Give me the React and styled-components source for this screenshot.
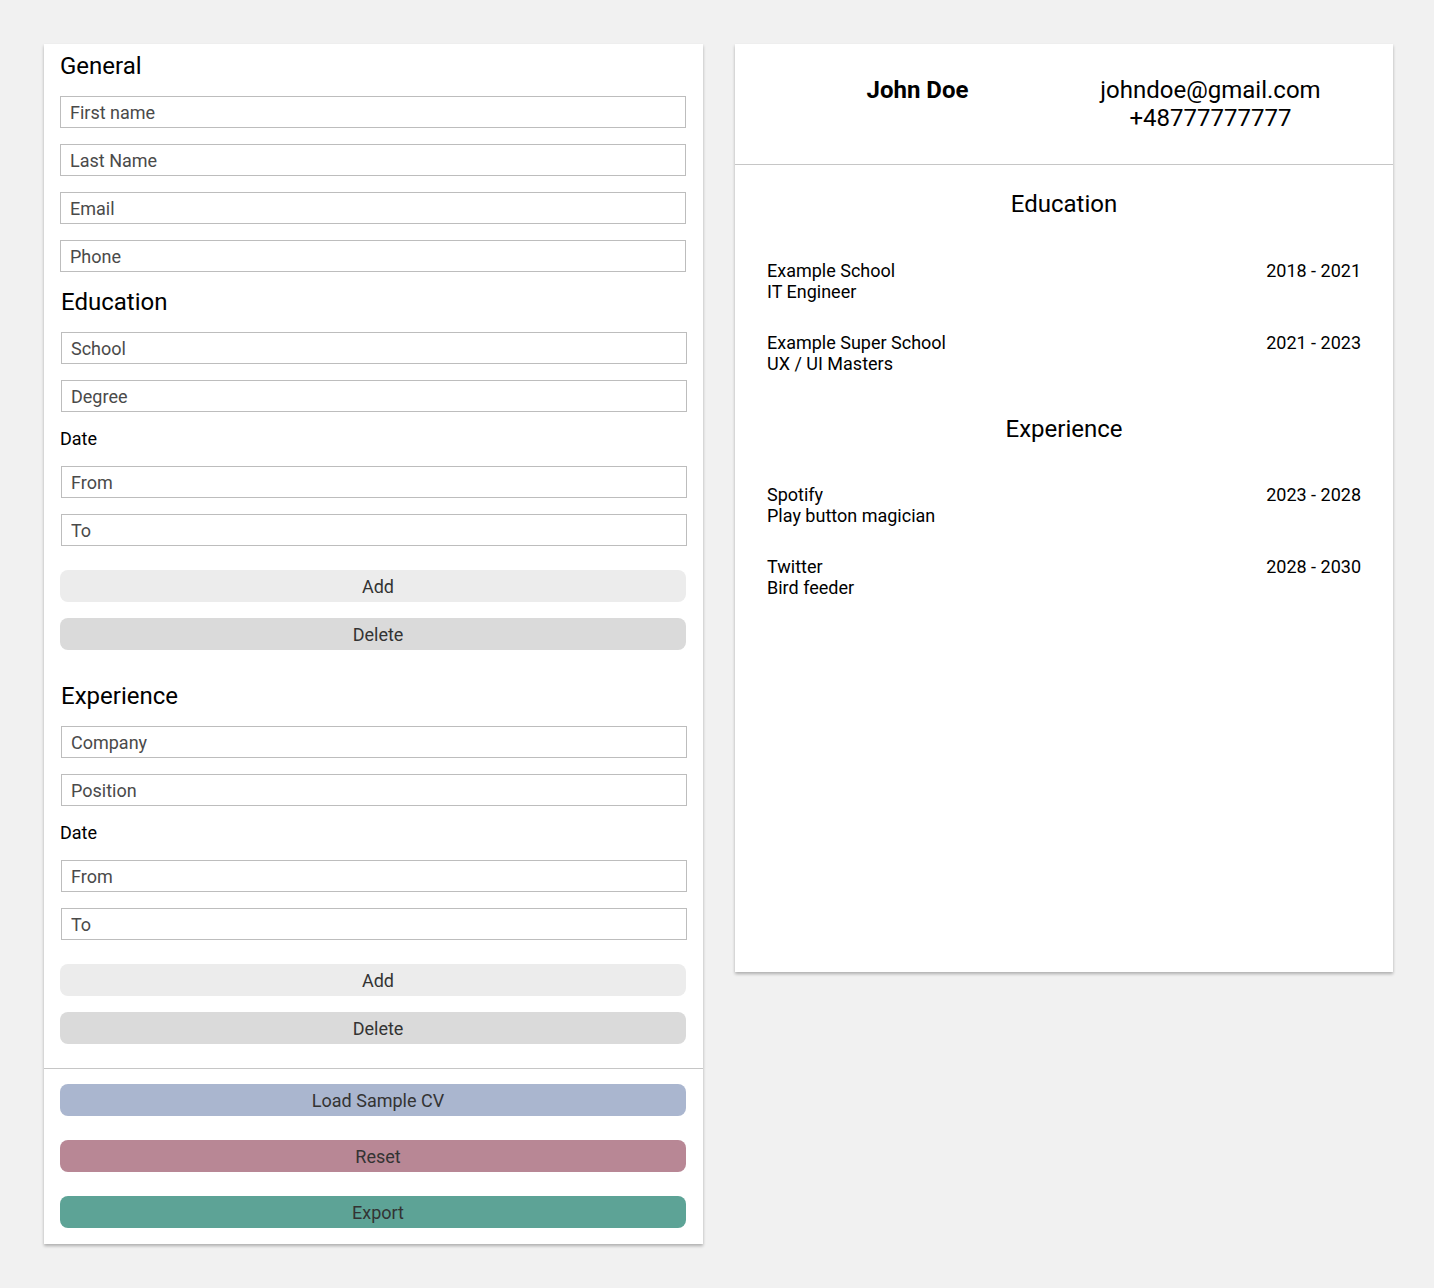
import React from 'react';
import styled, { createGlobalStyle } from 'styled-components';

// page + base styles
const GlobalStyle = createGlobalStyle`
  * { box-sizing: border-box; }
  body {
    margin: 0;
    background: #f1f1f1;
    font-family: Roboto, "Noto Sans", sans-serif;
    color: #000;
  }
`;

const Page = styled.div`
  display: grid;
  grid-template-columns: 659px 658px;
  column-gap: 32px;
  align-items: start;
  padding: 44px 41px 44px 44px;
`;

const Card = styled.div`
  background: #fff;
  box-shadow: 0 2px 3px rgba(0, 0, 0, 0.28);
`;

// editor side
const Editor = styled(Card)`
  display: flex;
  flex-direction: column;
  padding: 8px 0 16px;
`;

const FormBody = styled.div`
  display: flex;
  flex-direction: column;
  gap: 16px;
  padding: 0 17px 0 16px;
`;

const Heading = styled.h2`
  margin: ${(p) => (p.$spaced ? '16px' : '0')} 0 0 ${(p) => (p.$shift ? '1px' : '0')};
  font-size: 24px;
  line-height: 28px;
  font-weight: 400;
`;

const Label = styled.div`
  font-size: 18px;
  line-height: 22px;
`;

const Input = styled.input`
  display: block;
  width: 100%;
  height: 32px;
  margin: 0 0 0 ${(p) => (p.$shift ? '1px' : '0')};
  padding: 0 9px;
  border: 1px solid #bdbdbd;
  border-radius: 0;
  font-family: inherit;
  font-size: 18px;
  color: #333;
  outline: none;
  &::placeholder {
    color: #4a4a4a;
  }
`;

const ButtonGroup = styled.div`
  display: flex;
  flex-direction: column;
  gap: ${(p) => p.$gap || 16}px;
  margin-top: ${(p) => p.$top || 0}px;
`;

const Button = styled.button`
  height: 32px;
  width: 100%;
  padding: 0 0 0 10px;
  border: none;
  border-radius: 8px;
  background: ${(p) => p.$bg};
  font-family: inherit;
  font-size: 18px;
  color: #333;
  cursor: pointer;
`;

const Actions = styled.div`
  margin-top: 24px;
  border-top: 1px solid #c6c6c6;
  padding: 15px 17px 0 16px;
`;

// preview side
const Preview = styled(Card)`
  height: 928px;
`;

const PreviewHeader = styled.div`
  display: grid;
  grid-template-columns: 1fr 1fr;
  padding: 32px 36px;
  border-bottom: 1px solid #c6c6c6;
  text-align: center;
  font-size: 24px;
  line-height: 28px;
`;

const Name = styled.div`
  font-weight: 700;
`;

const PreviewBody = styled.div`
  padding: 25px 32px 0;
`;

const PreviewTitle = styled.h3`
  margin: ${(p) => (p.$first ? '0' : '41px')} 0 41.5px;
  text-align: center;
  font-size: 24px;
  line-height: 28px;
  font-weight: 400;
`;

const EntryList = styled.div`
  display: flex;
  flex-direction: column;
  gap: 30px;
`;

const Entry = styled.div`
  display: flex;
  justify-content: space-between;
  font-size: 18px;
  line-height: 21px;
`;

const education = [
  { title: 'Example School', sub: 'IT Engineer', from: '2018', to: '2021' },
  { title: 'Example Super School', sub: 'UX / UI Masters', from: '2021', to: '2023' },
];

const experience = [
  { title: 'Spotify', sub: 'Play button magician', from: '2023', to: '2028' },
  { title: 'Twitter', sub: 'Bird feeder', from: '2028', to: '2030' },
];

function EntryRows({ items }) {
  return (
    <EntryList>
      {items.map((it) => (
        <Entry key={it.title}>
          <div>
            <div>{it.title}</div>
            <div>{it.sub}</div>
          </div>
          <div>{it.from} - {it.to}</div>
        </Entry>
      ))}
    </EntryList>
  );
}

function DateBlock() {
  return (
    <>
      <Label>Date</Label>
      <Input $shift placeholder="From" />
      <Input $shift placeholder="To" />
      <ButtonGroup $top={8}>
        <Button $bg="#ececec">Add</Button>
        <Button $bg="#dadada">Delete</Button>
      </ButtonGroup>
    </>
  );
}

export default function App() {
  return (
    <>
      <GlobalStyle />
      <Page>
        <Editor>
          <FormBody>
            <Heading>General</Heading>
            <Input placeholder="First name" />
            <Input placeholder="Last Name" />
            <Input placeholder="Email" />
            <Input placeholder="Phone" />

            <Heading $shift>Education</Heading>
            <Input $shift placeholder="School" />
            <Input $shift placeholder="Degree" />
            <DateBlock />

            <Heading $shift $spaced>Experience</Heading>
            <Input $shift placeholder="Company" />
            <Input $shift placeholder="Position" />
            <DateBlock />
          </FormBody>
          <Actions>
            <ButtonGroup $gap={24}>
              <Button $bg="#aab6cf">Load Sample CV</Button>
              <Button $bg="#b88795">Reset</Button>
              <Button $bg="#5da396">Export</Button>
            </ButtonGroup>
          </Actions>
        </Editor>

        <Preview>
          <PreviewHeader>
            <Name>John Doe</Name>
            <div>
              <div>johndoe@gmail.com</div>
              <div>+48777777777</div>
            </div>
          </PreviewHeader>
          <PreviewBody>
            <PreviewTitle $first>Education</PreviewTitle>
            <EntryRows items={education} />
            <PreviewTitle>Experience</PreviewTitle>
            <EntryRows items={experience} />
          </PreviewBody>
        </Preview>
      </Page>
    </>
  );
}
